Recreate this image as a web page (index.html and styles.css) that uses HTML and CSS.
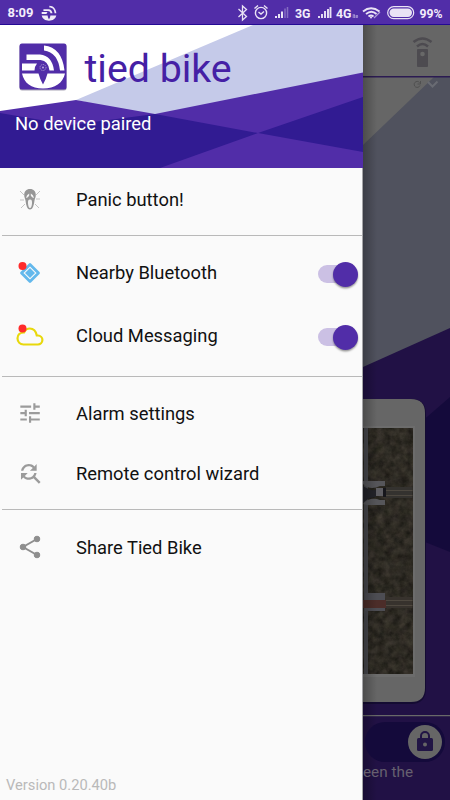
FILE: index.html
```html
<!DOCTYPE html>
<html lang="en">
<head>
<meta charset="utf-8">
<title>Tied Bike</title>
<link rel="stylesheet" href="styles.css">
</head>
<body>
<svg width="0" height="0" class="defs">
  <symbol id="wheel" viewBox="0 0 46 46">
    <path d="M2 30h17q0 4 4 12 4-8 4-12h17c-2 9-10 15-21 15S4 39 2 30Z"/>
    <path d="M7 12h15c6 0 11 6 11 12h-6c0-5-3-7-7-7H7Z"/>
    <path d="M2 20h17c-2 2-3 4-3 6H2ZM24 2c12 0 20 10 20 22h-5C39 13 33 7 24 7Z"/>
  </symbol>
</svg>
<header class="status">
  <span class="time">8:09</span>
  <svg class="st-logo" width="16" height="16"><use href="#wheel" fill="#f0ebf8"/></svg>
  <svg class="st-icons" width="213" height="24" viewBox="237 0 213 24" fill="none" stroke="#e9e3f5">
    <path d="m238.500 9 8 7.500-4 3.500V6l4 3.500-8 7.500" stroke-width="1.300"/>
    <circle cx="261" cy="13" r="5.600" stroke-width="1.400"/>
    <path d="m258.500 12 2.500 2 3-2.500M254.500 8.500l3.500-3M267.500 8.500l-3.500-3" stroke-width="1.400"/>
    <path d="M276 18v-2M279 18v-4M282 18v-6.500" stroke-width="2"/>
    <path d="M285 18V8.500M287.500 18V7" stroke-width="1.500" opacity=".35"/>
    <path d="M319 18v-2M322 18v-4M325 18v-7M328 18V9M330.500 18V7" stroke-width="1.900"/>
    <path d="M363 11.500q8-6.500 16.500 0M366 14q5.500-4.500 10.500 0M368.500 16.500q2.500-2 5 0" stroke-width="1.900"/>
    <circle cx="371" cy="17.500" r="1" fill="#e9e3f5" stroke="none"/>
    <path d="m374 18 6-6" stroke-width="1.300" opacity=".6"/>
    <rect x="387.700" y="6.700" width="26" height="12" rx="6" stroke-width="1.200"/>
    <rect x="389.500" y="8.500" width="22.500" height="8.500" rx="4.200" fill="#e9e3f5" stroke="none"/>
    <g class="st-text" stroke="none" fill="#f3eefb">
      <text x="295" y="17.500" textLength="15.500" lengthAdjust="spacingAndGlyphs">3G</text>
      <text x="336" y="17.500" textLength="15.500" lengthAdjust="spacingAndGlyphs">4G</text>
      <text x="352.500" y="17.500" font-size="5" opacity=".6">lte</text>
      <text x="419.500" y="17.500" textLength="23" lengthAdjust="spacingAndGlyphs">99%</text>
    </g>
  </svg>
</header>
<div class="screen">
  <aside class="drawer">
    <div class="head">
      <svg class="head-bg" width="363" height="143" viewBox="0 25 363 143">
        <path fill="#fff" d="M0 25h363v143H0z"/>
        <path fill="#c5cae9" d="M253 25h110v50l-208 42-79-17Z"/>
        <path fill="#512da8" d="m0 111 76-11 79 14 208-41.500V168H0Z"/>
        <path fill="#311b92" d="m0 113 70 12 85-11 103 19-98 35H0ZM258 133l105-36v55Z"/>
      </svg>
      <div class="brand">
        <svg class="logo" width="48" height="48" viewBox="0 0 48 48">
          <rect x=".5" y="1.500" width="47" height="46" rx="2.500" fill="#aaa6b5"/>
          <rect x=".5" y=".5" width="47" height="46" rx="2.500" fill="#512da8"/>
          <path fill="#fff" d="M3 30.500h16.500q1.500 6 4.500 11 3-5 4.500-11H46C44 40 36 45.500 24 45.500S5 40 3 30.500Z"/>
          <path fill="#fff" d="M7.500 11.500H21q12 1 14 16h-4.500q-1-9.500-9-10.500h-14ZM3 20.500h15q-2.500 3-2.500 7H3ZM25 2.500q18 2 20.500 25H41Q39 9.500 25 7.500Z"/>
          <circle cx="24" cy="24.500" r="3" fill="none" stroke="#b9a8dd" stroke-dasharray="1 1"/>
          <circle cx="24" cy="24.500" r="1" fill="#b9a8dd"/>
        </svg>
        <span class="name">tied bike</span>
      </div>
      <p class="paired">No device paired</p>
    </div>
    <nav class="menu">
      <div class="group g1">
        <div class="row"><svg class="ic" width="28" height="24" viewBox="0 0 28 24"><path d="m4 3 4 4m16-4-4 4M4 12h4m12-1h4M5 20l4-4m14 4-4-4" stroke="#c4c4c4" fill="none"/><path fill="#969696" d="M14 1c3.800 0 5.800 2.500 5.800 6 0 2-.8 3.500-1.300 5.500-.5 4-1.500 9-4.500 9s-4-5-4.500-9C9 10.500 8.200 9 8.200 7 8.200 3.500 10.200 1 14 1Z"/><path fill="#f4f4f4" d="M13.200 5.500Q10.500 6.500 10 10q2.300-.2 3.200-2.500ZM14.800 5.500q2.700 1 3.200 4.500-2.300-.2-3.200-2.500ZM14 11.500c1.800 0 2.200 1.500 2 4s-.9 4.500-2 4.500-1.800-2-2-4.500.2-4 2-4Z"/></svg><span>Panic button!</span></div>
      </div>
      <div class="group g2">
        <div class="row"><svg class="ic" width="28" height="24" viewBox="0 0 28 24"><path d="m14 3.500 8.500 8.500-8.500 8.500L5.500 12Z" fill="none" stroke="#63b8ec" stroke-width="2.800" stroke-linejoin="round"/><path d="m14 7 5 5-5 5-5-5Z" fill="#63b8ec"/><circle cx="6.500" cy="5" r="4" fill="#ff2b2b"/></svg><span>Nearby Bluetooth</span><i class="switch"></i></div>
        <div class="row"><svg class="ic" width="28" height="24" viewBox="0 0 28 24"><path d="M7.500 20.500h14.300a4.500 4.500 0 0 0 .2-9h-1.200C20 7.500 17.300 4.500 13.800 4.500c-3 0-4.800 1.700-5.800 4C4 8.500 1.500 11 1.500 14.300c0 3.700 2.700 6.200 6 6.200Z" fill="none" stroke="#e8d80c" stroke-width="2.200"/><circle cx="6.500" cy="4.500" r="4" fill="#ff2b2b"/></svg><span>Cloud Messaging</span><i class="switch"></i></div>
      </div>
      <div class="group g3">
        <div class="row"><svg class="ic" width="28" height="24" viewBox="-2 0 28 24"><g transform="translate(-.9 -.9) scale(1.080)"><path fill="#9b9b9b" d="M3 17v2h6v-2H3ZM3 5v2h10V5H3Zm10 16v-2h8v-2h-8v-2h-2v6h2ZM7 9v2H3v2h4v2h2V9H7Zm14 4v-2H11v2h10Zm-6-4h2V7h4V5h-4V3h-2v6Z"/></g></svg><span>Alarm settings</span></div>
        <div class="row"><svg class="ic" width="28" height="24" viewBox="-2 0 28 24"><g transform="translate(-1.500 -1.400) scale(1.120)"><path fill="#9b9b9b" d="M11 6c1.380 0 2.630.560 3.540 1.460L12 10h6V4l-2.050 2.050C14.680 4.780 12.930 4 11 4c-3.530 0-6.430 2.610-6.920 6H6.100c.460-2.280 2.480-4 4.900-4Zm5.640 9.140c.660-.900 1.120-1.970 1.280-3.140H15.900c-.460 2.280-2.480 4-4.900 4-1.380 0-2.630-.560-3.540-1.460L10 12H4v6l2.050-2.050C7.320 17.220 9.070 18 11 18c1.550 0 2.980-.510 4.140-1.360L20 21.490 21.490 20l-4.850-4.860Z"/></g></svg><span>Remote control wizard</span></div>
      </div>
      <div class="group g4">
        <div class="row"><svg class="ic" width="28" height="24" viewBox="0 0 28 24"><g fill="#8e8e8e" stroke="#8e8e8e"><path d="M21 4 7 12l14 8" fill="none" stroke-width="2"/><circle cx="21" cy="4" r="2.800"/><circle cx="7" cy="12" r="2.800"/><circle cx="21" cy="20" r="2.800"/></g></svg><span>Share Tied Bike</span></div>
      </div>
    </nav>
    <footer class="version">Version 0.20.40b</footer>
  </aside>
  <main class="behind">
    <svg class="scene" width="87" height="775" viewBox="363 25 87 775">
      <defs>
        <filter id="ground" x="0" y="0" width="100%" height="100%" color-interpolation-filters="sRGB">
          <feTurbulence type="fractalNoise" baseFrequency=".13" numOctaves="5" seed="8"/>
          <feColorMatrix values=".2 0 0 0 .075  .18 .02 0 0 .062  .16 0 .02 0 .045  0 0 0 0 1"/>
        </filter>
        <linearGradient id="shade"><stop offset="0" stop-opacity=".25"/><stop offset="1" stop-opacity="0"/></linearGradient>
      </defs>
      <path fill="#666" d="M363 25h87v775h-87z"/>
      <path fill="#50525e" d="M434 77h16v300h-87V145Z"/>
      <path fill="#211145" d="m363 367 87-39v472h-87Z"/>
      <path fill="#140a3b" d="M450 397v155l-60-24v-79Z"/>
      <path fill="#2b1b52" d="M363 76h87v1.500h-87z"/>
      <g fill="none" stroke="#4d4b50" stroke-width="2.500"><path d="M413.500 42q9-7 18 0M417 46.500q5.500-5 11 0"/></g>
      <rect x="417" y="49" width="11" height="18" rx="1" fill="#4d4b50"/><circle cx="422.500" cy="54" r="2.300" fill="#686868"/>
      <path d="M419.500 82.500a3 3 0 1 0 .5 3M420.500 81v3h-3" fill="none" stroke="#505050"/>
      <path d="m428 82 4.500 4.500 5-5" fill="none" stroke="#696b73" stroke-width="2"/>
      <path d="M363 399h48q15 0 15 15v274q0 16-15 16h-48Z" fill="#140b32"/>
      <path d="M363 399h48q14 0 14 14v275q0 14-14 14h-48Z" fill="#666"/>
      <path d="M363 426h52v251h-52z" fill="#6c6c6c"/>
      <rect x="363" y="428" width="49.500" height="246" filter="url(#ground)"/>
      <path fill="#48494e" d="M364 428h4v246h-4z"/>
      <path fill="#34322f" d="M386 487h26.500v11H386z"/>
      <path stroke="#4c473f" d="M386 490.500h26.500M386 495.500h26.500"/>
      <path fill="#56565a" d="M367 481h18v5h-5q-10 5-17-2v-3ZM363 504q7-8 17-4h5v5h-18Z"/>
      <path fill="#232329" d="M363 486q7 5 13 4v7q-6-1-13 6Z"/>
      <path fill="#5e5d62" d="M376 488h7v8h-7z"/>
      <path fill="#17171c" d="M383 488h3v9h-3z"/>
      <path fill="#4d4d53" d="M365 593h20v18h-20z"/>
      <path fill="#4c2d29" d="M363 600h23v8h-23z"/>
      <path fill="#37322d" d="M386 597h26.500v11H386z"/>
      <path stroke="#4e483f" d="M386 600.500h26.500M386 605.500h26.500"/>
      <path fill="#696969" d="M363 715h87v1.300h-87z"/>
      <path fill="url(#shade)" d="M363 25h14v775h-14z"/>
    </svg>
    <div class="bottom">
      <div class="lock-track"><div class="lock-knob">
        <svg width="18" height="22" viewBox="0 0 18 22"><path d="M5 9V6a4 4 0 0 1 8 0v3" fill="none" stroke="#211545" stroke-width="2"/><rect x="1" y="8" width="16" height="13" rx="1.500" fill="#211545"/><circle cx="9" cy="14.500" r="2" fill="#666"/></svg>
      </div></div>
      <p class="hint">een the</p>
    </div>
  </main>
</div>
</body>
</html>
```
FILE: styles.css
```css
* { box-sizing: border-box; }
body {
  margin: 0;
  width: 450px;
  height: 800px;
  overflow: hidden;
  display: flex;
  flex-direction: column;
  font-family: Roboto, "Liberation Sans", sans-serif;
}
p { margin: 0; }
svg { display: block; flex: none; }
.defs { position: absolute; }
.status {
  flex: none;
  display: flex;
  align-items: center;
  height: 25px;
  padding-left: 7.500px;
  background: #512da8;
  border-bottom: 1px solid #240a94;
  color: #f3eefb;
}
.time { width: 33px; padding-top: 1px; font-size: 13px; font-weight: 700; }
.st-logo { margin-top: 1px; }
.st-icons { margin-left: auto; }
.st-text { font-size: 12.500px; font-weight: 700; }
.screen { flex: 1; display: flex; min-height: 0; }
.drawer {
  width: 363px;
  flex: none;
  display: flex;
  flex-direction: column;
  background: #fafafa;
  border-right: 1px solid #a5a5a8;
}
.head { position: relative; height: 143px; margin-right: -1px; }
.head-bg { position: absolute; left: 0; top: 0; }
.brand {
  position: relative;
  display: flex;
  align-items: center;
  gap: 18px;
  height: 48px;
  margin: 0 0 0 18.500px;
  top: 18px;
}
.name { font-size: 39.300px; line-height: 48px; color: #4520a5; padding-top: 4px; }
.paired { position: relative; margin: 39.500px 0 0 15px; font-size: 18.400px; line-height: 22px; color: #fff; }
.group { border-bottom: 1px solid #b9b9b9; margin-left: 1.500px; }
.row { display: flex; align-items: center; padding-left: 14.500px; font-size: 18.350px; color: #111; }
.row span { margin-left: 32px; white-space: nowrap; }
.g1 { height: 68px; }
.g1 .row { height: 63px; }
.g2 { height: 141px; padding-top: 5px; }
.g2 .row { height: 63px; }
.g3 { height: 133px; padding-top: 6px; }
.g3 .row { height: 60px; }
.g4 { border: 0; padding-top: 7px; }
.g4 .row { height: 60px; }
.switch {
  display: flex;
  justify-content: flex-end;
  align-items: center;
  width: 37px;
  height: 18px;
  margin: 3px 7px 0 auto;
  border-radius: 9px;
  background: #cbc0e4;
}
.switch::after {
  content: "";
  flex: none;
  width: 25px;
  height: 25px;
  margin-right: -3px;
  border-radius: 50%;
  background: #512da8;
  box-shadow: 0 1.500px 2px rgba(0, 0, 0, .4);
}
.version { margin: auto 0 6px 6px; font-size: 14.700px; line-height: 18px; color: #b9b9b9; }
.behind { position: relative; flex: 1; display: flex; flex-direction: column; justify-content: flex-end; overflow: hidden; }
.scene { position: absolute; left: 0; top: 0; }
.bottom { position: relative; height: 78px; }
.lock-track {
  display: flex;
  justify-content: flex-end;
  align-items: center;
  height: 40px;
  margin: 0 5px 0 2px;
  padding-right: 3px;
  border-radius: 20px;
  background: #140a3b;
}
.lock-knob {
  display: flex;
  align-items: center;
  justify-content: center;
  width: 34px;
  height: 34px;
  padding-bottom: 2px;
  border-radius: 50%;
  background: #666;
}
.hint { font-size: 15.300px; line-height: 20px; color: #66606f; }
```
